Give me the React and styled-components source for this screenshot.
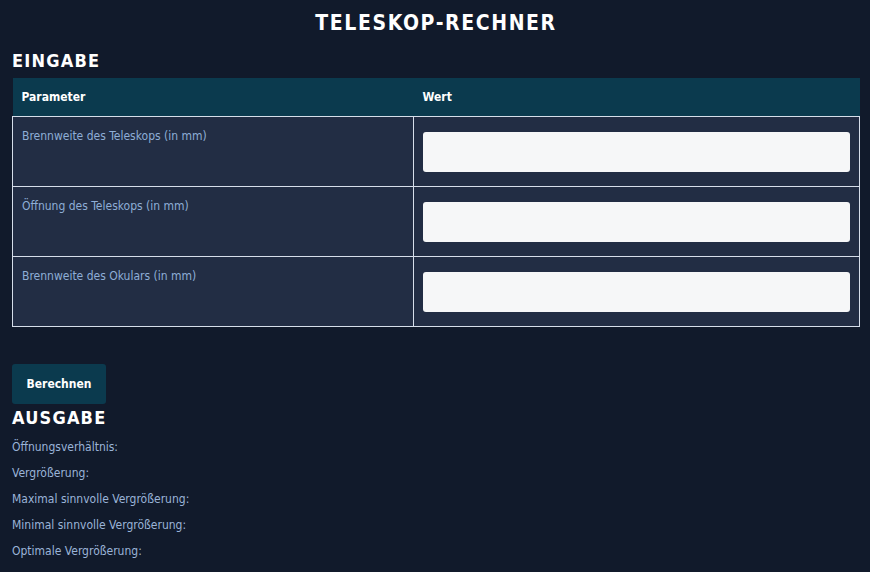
import styled, { createGlobalStyle } from "styled-components";

const GlobalStyle = createGlobalStyle`
  body {
    margin: 0;
    background: #111a2b;
    font-family: "DejaVu Sans Condensed", "DejaVu Sans", sans-serif;
  }
`;

const params = [
  "Brennweite des Teleskops (in mm)",
  "Öffnung des Teleskops (in mm)",
  "Brennweite des Okulars (in mm)",
];

const outputs = [
  "Öffnungsverhältnis:",
  "Vergrößerung:",
  "Maximal sinnvolle Vergrößerung:",
  "Minimal sinnvolle Vergrößerung:",
  "Optimale Vergrößerung:",
];

const App = () => {
  return (
    <>
      <GlobalStyle />
      <Page>
        <Title>Teleskop-Rechner</Title>
        <SectionTitle>Eingabe</SectionTitle>
        <Table>
          <colgroup>
            <col style={{ width: 401 }} />
            <col />
          </colgroup>
          <thead>
            <tr>
              <HeadCell>Parameter</HeadCell>
              <HeadCell>Wert</HeadCell>
            </tr>
          </thead>
          <tbody>
            {params.map((p) => (
              <tr key={p}>
                <LabelCell>{p}</LabelCell>
                <InputCell>
                  <Input type="number" />
                </InputCell>
              </tr>
            ))}
          </tbody>
        </Table>
        <Button>Berechnen</Button>
        <SectionTitle>Ausgabe</SectionTitle>
        <Results>
          {outputs.map((o) => (
            <ResultLine key={o}>{o}</ResultLine>
          ))}
        </Results>
      </Page>
    </>
  );
};

export default App;

const Page = styled.div`
  padding: 8px 10px 0 12px;
`;

const Title = styled.h1`
  margin: 2px 0 0;
  text-align: center;
  font-family: "DejaVu Sans Condensed", "DejaVu Sans", sans-serif;
  font-weight: bold;
  font-size: 21px;
  letter-spacing: 1.6px;
  text-transform: uppercase;
  color: #ffffff;
  line-height: 26px;
`;

const SectionTitle = styled.h2`
  margin: 0;
  font-family: "DejaVu Sans Condensed", "DejaVu Sans", sans-serif;
  font-weight: bold;
  font-size: 18px;
  letter-spacing: 1.2px;
  text-transform: uppercase;
  color: #ffffff;
  line-height: 24px;
  padding-top: 2px;

  &:first-of-type {
    margin-top: 11px;
  }
`;

const Table = styled.table`
  width: 848px;
  table-layout: fixed;
  margin-top: 5px;
  border-collapse: collapse;
  margin-bottom: 37px;
`;

const HeadCell = styled.th`
  background: #0b3a4e;
  color: #ffffff;
  text-align: left;
  font-size: 12px;
  font-weight: bold;
  padding: 0 9px;
  height: 38px;
  border-bottom: 1px solid #d6deea;
`;

const LabelCell = styled.td`
  background: #222d44;
  border: 1px solid #d6deea;
  color: #8eaed6;
  font-size: 12px;
  vertical-align: top;
  padding: 12px 9px 10px;
  height: 47px;
`;

const InputCell = styled.td`
  background: #222d44;
  border: 1px solid #d6deea;
  padding: 14px 9px 14px 9px;
`;

const Input = styled.input`
  display: block;
  box-sizing: border-box;
  width: 100%;
  height: 40px;
  border: none;
  border-radius: 3px;
  background: #f6f7f8;
  outline: none;
`;

const Button = styled.button`
  display: block;
  width: 94px;
  height: 40px;
  border: none;
  border-radius: 3px;
  background: #0b3a4e;
  color: #ffffff;
  font-family: "DejaVu Sans Condensed", "DejaVu Sans", sans-serif;
  font-weight: bold;
  font-size: 12px;
`;

const Results = styled.div`
  display: flex;
  flex-direction: column;
  margin-top: 4px;
`;

const ResultLine = styled.p`
  margin: 0;
  color: #9bb4d8;
  font-size: 12px;
  line-height: 26px;
`;
